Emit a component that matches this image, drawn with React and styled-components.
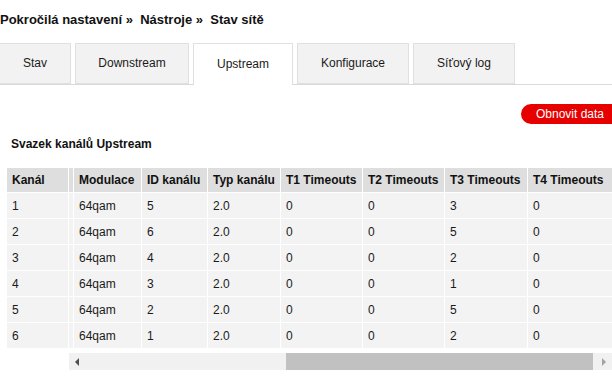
import React from "react";
import styled, { createGlobalStyle } from "styled-components";

const Global = createGlobalStyle`
  html, body { margin: 0; padding: 0; background: #fff; overflow: hidden; }
  body { font-family: "Liberation Sans", Arial, sans-serif; color: #1a1a1a; }
`;

const Page = styled.div`
  width: 612px;
  height: 376px;
  overflow: hidden;
  display: flex;
  flex-direction: column;
`;

const Breadcrumb = styled.div`
  font-size: 13px;
  font-weight: bold;
  color: #111;
  height: 15px;
  line-height: 15px;
  margin-top: 12px;
  white-space: pre;
`;

const TabBar = styled.div`
  display: flex;
  gap: 4px;
  margin-top: 16px;
  height: 42px;
  border-bottom: 1px solid #d9d9d9;
  box-sizing: border-box;
  margin-left: -1px;
`;

const Tab = styled.div`
  width: ${(p) => p.$w}px;
  box-sizing: border-box;
  height: ${(p) => (p.$active ? 42 : 41)}px;
  border: 1px solid #e0e0e0;
  border-bottom: ${(p) => (p.$active ? "none" : "1px solid #e0e0e0")};
  background: ${(p) => (p.$active ? "#fff" : "#f2f2f2")};
  font-size: 12px;
  color: #1a1a1a;
  display: flex;
  align-items: center;
  justify-content: center;
  padding-bottom: 1px;
`;

const ButtonRow = styled.div`
  display: flex;
  justify-content: flex-end;
  margin-top: 19px;
  margin-right: -10px;
`;

const RefreshButton = styled.button`
  height: 20px;
  border: none;
  border-radius: 10px;
  background: #e60000;
  color: #fff;
  font-family: "Liberation Sans", Arial, sans-serif;
  font-size: 12px;
  padding: 0 18px 0 15px;
  line-height: 20px;
`;

const Title = styled.div`
  font-size: 12px;
  font-weight: bold;
  color: #111;
  margin: 13px 0 0 11px;
  line-height: 14px;
`;

const TableWrap = styled.div`
  margin-top: 16px;
  margin-left: 6px;
  overflow: hidden;
  width: 606px;
`;

const Table = styled.table`
  border-collapse: separate;
  border-spacing: 1px;
  table-layout: fixed;
  width: 613px;
  font-size: 12px;
`;

const Th = styled.th`
  width: ${(p) => p.$w}px;
  background: #dedede;
  height: 24px;
  padding: 0 0 0 ${(p) => (p.$narrow ? 0 : 5)}px;
  box-sizing: border-box;
  text-align: left;
  font-weight: bold;
  color: #111;
  white-space: nowrap;
  overflow: hidden;
`;

const Td = styled.td`
  background: #f3f3f3;
  height: 25px;
  padding: 0 0 0 ${(p) => (p.$narrow ? 0 : 5)}px;
  box-sizing: border-box;
  color: #1a1a1a;
  white-space: nowrap;
`;

const ScrollBar = styled.div`
  margin: 4px 0 0 69px;
  height: 17px;
  background: #f1f1f1;
  display: flex;
  align-items: center;
`;

const Arrow = styled.div`
  width: 17px;
  height: 17px;
  display: flex;
  align-items: center;
  justify-content: center;
  flex: none;
`;

const Track = styled.div`
  flex: 1;
  height: 17px;
  display: flex;
  justify-content: flex-end;
  padding-right: 2px;
`;

const Thumb = styled.div`
  width: 307px;
  height: 17px;
  background: #c1c1c1;
`;

const columns = [
  { label: "Kanál", w: 61 },
  { label: "", w: 4, narrow: true },
  { label: "Modulace", w: 67 },
  { label: "ID kanálu", w: 65 },
  { label: "Typ kanálu", w: 72 },
  { label: "T1 Timeouts", w: 81 },
  { label: "T2 Timeouts", w: 81 },
  { label: "T3 Timeouts", w: 82 },
  { label: "T4 Timeouts", w: 90 },
];

const rows = [
  ["1", "", "64qam", "5", "2.0", "0", "0", "3", "0"],
  ["2", "", "64qam", "6", "2.0", "0", "0", "5", "0"],
  ["3", "", "64qam", "4", "2.0", "0", "0", "2", "0"],
  ["4", "", "64qam", "3", "2.0", "0", "0", "1", "0"],
  ["5", "", "64qam", "2", "2.0", "0", "0", "5", "0"],
  ["6", "", "64qam", "1", "2.0", "0", "0", "2", "0"],
];

const tabs = [
  { label: "Stav", w: 72 },
  { label: "Downstream", w: 114 },
  { label: "Upstream", w: 100, active: true },
  { label: "Konfigurace", w: 112 },
  { label: "Síťový log", w: 102 },
];

export default function App() {
  return (
    <>
      <Global />
      <Page>
        <Breadcrumb>{"Pokročilá nastavení »  Nástroje »  Stav sítě"}</Breadcrumb>
        <TabBar>
          {tabs.map((t) => (
            <Tab key={t.label} $w={t.w} $active={t.active}>
              {t.label}
            </Tab>
          ))}
        </TabBar>
        <ButtonRow>
          <RefreshButton>Obnovit data</RefreshButton>
        </ButtonRow>
        <Title>Svazek kanálů Upstream</Title>
        <TableWrap>
          <Table>
            <thead>
              <tr>
                {columns.map((c, i) => (
                  <Th key={i} $w={c.w} $narrow={c.narrow}>
                    {c.label}
                  </Th>
                ))}
              </tr>
            </thead>
            <tbody>
              {rows.map((r, i) => (
                <tr key={i}>
                  {r.map((v, j) => (
                    <Td key={j} $narrow={columns[j].narrow}>
                      {v}
                    </Td>
                  ))}
                </tr>
              ))}
            </tbody>
          </Table>
        </TableWrap>
        <ScrollBar>
          <Arrow>
            <svg width="5" height="8" viewBox="0 0 5 8">
              <path d="M4 0 L0 4 L4 8 Z" fill="#505050" />
            </svg>
          </Arrow>
          <Track>
            <Thumb />
          </Track>
          <Arrow>
            <svg width="5" height="8" viewBox="0 0 5 8">
              <path d="M1 0 L5 4 L1 8 Z" fill="#a3a3a3" />
            </svg>
          </Arrow>
        </ScrollBar>
      </Page>
    </>
  );
}
